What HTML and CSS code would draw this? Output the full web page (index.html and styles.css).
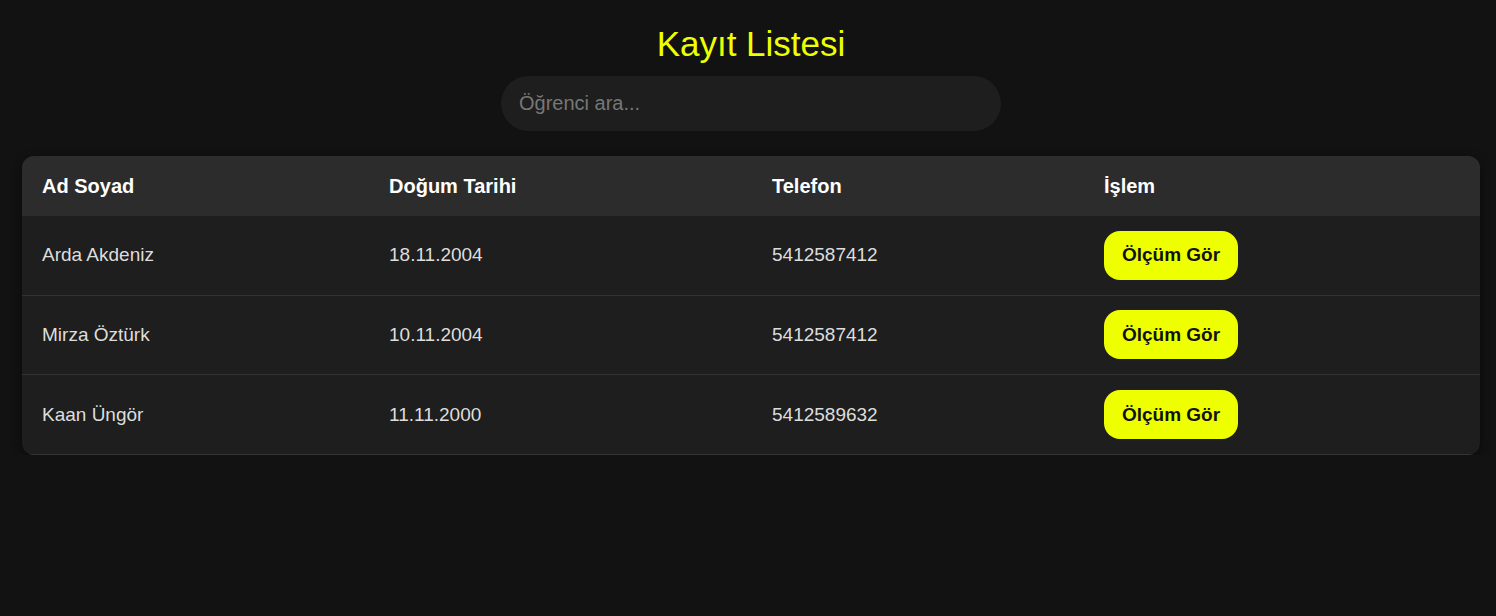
FILE: index.html
```html
<!DOCTYPE html>
<html lang="tr">
<head>
<meta charset="utf-8">
<title>Kayıt Listesi</title>
<link rel="stylesheet" href="styles.css">
</head>
<body>
<div class="page">
  <h1 class="title">Kayıt Listesi</h1>
  <div class="search-wrap">
    <input class="search" type="text" placeholder="Öğrenci ara...">
  </div>
  <div class="table-card">
    <table class="list">
      <colgroup>
        <col class="c1"><col class="c2"><col class="c3"><col class="c4">
      </colgroup>
      <thead>
        <tr><th>Ad Soyad</th><th>Doğum Tarihi</th><th>Telefon</th><th>İşlem</th></tr>
      </thead>
      <tbody>
        <tr><td>Arda Akdeniz</td><td>18.11.2004</td><td>5412587412</td><td><button class="btn">Ölçüm Gör</button></td></tr>
        <tr><td>Mirza Öztürk</td><td>10.11.2004</td><td>5412587412</td><td><button class="btn">Ölçüm Gör</button></td></tr>
        <tr><td>Kaan Üngör</td><td>11.11.2000</td><td>5412589632</td><td><button class="btn">Ölçüm Gör</button></td></tr>
      </tbody>
    </table>
  </div>
</div>
</body>
</html>
```
FILE: styles.css
```css
html, body {
  margin: 0;
  padding: 0;
  background: #121212;
  font-family: "Liberation Sans", Arial, sans-serif;
  color: #ddd;
}
.page {
  padding: 22px 16px 0 22px;
}
.title {
  margin: 0;
  text-align: center;
  color: #eeff00;
  font-size: 35px;
  font-weight: normal;
  line-height: 43px;
}
.search-wrap {
  display: flex;
  justify-content: center;
  margin-top: 11px;
}
.search {
  width: 500px;
  height: 55px;
  box-sizing: border-box;
  border: none;
  outline: none;
  border-radius: 28px;
  background: #1e1e1e;
  color: #ddd;
  padding: 0 18px;
  font-family: inherit;
  font-size: 20px;
}
.search::placeholder {
  color: #777;
}
.table-card {
  margin-top: 25px;
  border-radius: 12px;
  overflow: hidden;
  background: #1e1e1e;
  box-shadow: 0 2px 10px rgba(0,0,0,0.5);
}
.list {
  width: 100%;
  border-collapse: collapse;
  table-layout: fixed;
}
.c1 { width: 347px; }
.c2 { width: 383px; }
.c3 { width: 332px; }
.list th {
  background: #2c2c2c;
  color: #fff;
  font-size: 20px;
  font-weight: bold;
  text-align: left;
  padding: 0 20px;
  height: 60px;
  box-sizing: border-box;
}
.list td {
  font-size: 19px;
  text-align: left;
  padding: 0 20px;
  height: 78.67px;
  border-bottom: 1px solid #333;
  color: #ddd;
}
.btn {
  background: #eeff00;
  color: #111;
  border: none;
  border-radius: 16px;
  font-family: inherit;
  font-size: 19px;
  font-weight: bold;
  height: 49px;
  width: 134px;
  padding: 0;
  cursor: pointer;
}
```
